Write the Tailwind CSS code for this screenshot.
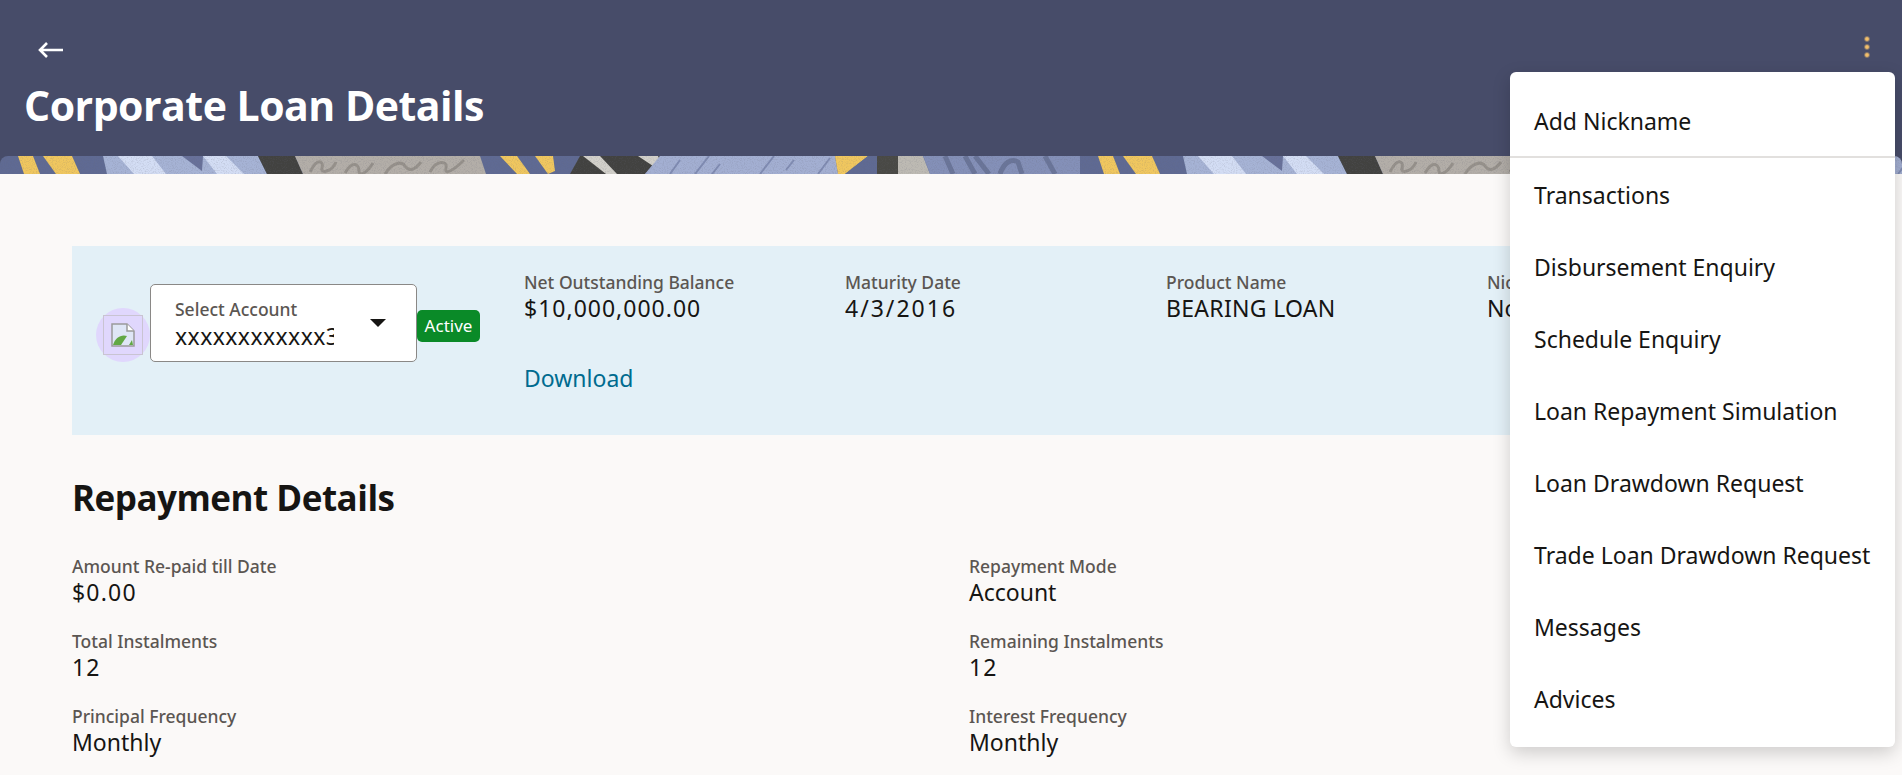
<!DOCTYPE html>
<html lang="en">
<head>
  <meta charset="UTF-8" />
  <meta name="viewport" content="width=device-width, initial-scale=1" />
  <title>Corporate Loan Details</title>
  <script src="https://cdn.jsdelivr.net/npm/@tailwindcss/browser@4"></script>
</head>
<body class="relative h-[775px] overflow-hidden bg-[#fbf9f8] font-['Noto_Sans',sans-serif] text-[#161513]">
  <header class="h-[156px] bg-[#474c69] text-white pl-[24px] pt-[38px]">
    <button class="block ml-[14px] h-6">
      <svg width="25" height="24" viewBox="0 0 25 24" fill="none" stroke="white" stroke-width="2.6"><path d="M25 12H2M9 5l-7 7 7 7" /></svg>
    </button>
    <h1 class="mt-[16px] text-[41px] leading-[54px] font-bold tracking-[-0.5px] font-['Open_Sans',sans-serif]">Corporate Loan Details</h1>
  </header>

  <!-- decorative strip, tile repeats every 1080px -->
  <div class="bg-[#474c69]">
    <svg class="block rounded-t-[8px]" width="1902" height="18">
      <defs>
        <filter id="soft"><feGaussianBlur stdDeviation="0.5" /></filter>
        <filter id="grain">
          <feTurbulence type="fractalNoise" baseFrequency="0.9" numOctaves="2" />
          <feColorMatrix values="0 0 0 0 0.15  0 0 0 0 0.15  0 0 0 0 0.2  0 0 0 1.6 -0.75" />
        </filter>
        <pattern id="strip" width="1080" height="18" patternUnits="userSpaceOnUse">
          <rect width="1080" height="18" fill="#5f6b93" />
          <polygon points="18,0 33,0 40,18 24,18" fill="#f0c75e" />
          <polygon points="43,0 72,0 80,18 56,18" fill="#f0c75e" />
          <polygon points="103,0 258,0 267,18 107,18" fill="#a6b3d5" />
          <polygon points="118,0 152,0 166,18 134,18" fill="#d3ddf4" />
          <polygon points="182,0 203,0 202,15" fill="#67719a" />
          <polygon points="203,0 226,0 244,18 217,18" fill="#d3ddf4" />
          <polygon points="258,0 295,0 303,18 267,18" fill="#42423f" />
          <polygon points="295,0 480,0 486,18 303,18" fill="#b3aea8" />
          <path d="M310 16c8-16 14-10 12-4s10 4 14-6M345 17c8-14 14-8 14-2s8 2 14-8M385 18c6-10 16-14 20-8s10 4 16-4M430 16c6-12 18-12 16-4s8 2 18-8" fill="none" stroke="#96918b" stroke-width="3" />
          <polygon points="500,0 517,0 530,18 517,18" fill="#f0c75e" />
          <polygon points="535,0 553,0 555,15 548,18" fill="#f0c75e" />
          <polygon points="580,0 660,0 645,18 570,18" fill="#42423f" />
          <polygon points="583,0 600,0 617,18 606,18" fill="#d2d0ca" />
          <polygon points="638,0 658,0 660,5 653,10" fill="#d2d0ca" />
          <polygon points="660,0 835,0 838,18 645,18" fill="#a3afd2" />
          <path d="M670 18l10-14M695 18l14-18M712 18l8-10M760 18l14-18M786 14l8-10M818 18l12-16" stroke="#7f8bb2" stroke-width="2" fill="none" />
          <polygon points="835,0 868,0 845,18 838,18" fill="#f0c75e" />
          <polygon points="868,0 877,0 877,18 845,18" fill="#5f6b93" />
          <rect x="877" width="21" height="18" fill="#4a4a45" />
          <polygon points="898,0 923,0 930,18 898,18" fill="#bdbab3" />
          <polygon points="923,0 1080,0 1080,18 930,18" fill="#8490b8" />
          <path d="M945 0l8 18M965 0l10 18M975 0l14 18M1000 18c4-12 12-16 18-12l4 12M1045 0l10 18" stroke="#6a7599" stroke-width="5" fill="none" />
        </pattern>
      </defs>
      <rect width="1902" height="18" fill="url(#strip)" filter="url(#soft)" />
      <rect width="1902" height="18" filter="url(#grain)" opacity="0.35" />
    </svg>
  </div>

  <main class="px-[72px] pt-[72px]">
    <section class="flex h-[189px] bg-[#e3f0f7]">
      <div class="flex w-[452px] shrink-0 items-start pl-[24px]">
        <div class="relative mt-[62px] size-[54px] rounded-full bg-[#e0d7fd]">
          <div class="absolute left-[7px] top-[7px] flex size-10 items-center justify-center border border-[#c9c4d2]">
            <svg width="24" height="24" viewBox="0 0 24 24">
              <path d="M1 1h15l7 7v15H1z" fill="#dfe6f6" stroke="#9b9b9b" stroke-width="1.5" />
              <path d="M16 1v7h7" fill="#fff" stroke="#9b9b9b" stroke-width="1.5" />
              <path d="M2 22c2-7 8-11 14-9l-6 9z" fill="#62a845" />
              <path d="M18 22l3-5 1 5z" fill="#62a845" />
            </svg>
          </div>
        </div>
        <div class="relative mt-[38px] h-[78px] w-[267px] shrink-0 rounded-[5px] border border-[#8a8886] bg-white pl-[24px] pt-[11px]">
          <div class="text-[17.5px] leading-[26px] font-medium text-[#5b5652]">Select Account</div>
          <div class="mt-px w-[159px] overflow-hidden text-[23px] leading-[26px] tracking-[0.4px] whitespace-nowrap">xxxxxxxxxxxx3456</div>
          <svg class="absolute left-[219px] top-[34px]" width="16" height="8" viewBox="0 0 16 8"><path d="M0 0h16l-8 8z" fill="#161513" /></svg>
        </div>
        <span class="mt-[64px] flex h-8 w-[63px] shrink-0 items-center justify-center rounded-[5px] bg-[#0a8a28] text-[17px] text-white">Active</span>
      </div>

      <div class="grid grid-cols-[repeat(4,321px)] pt-[23px]">
        <div>
          <div class="text-[17.5px] leading-[26px] font-medium text-[#5b5652]">Net Outstanding Balance</div>
          <div class="text-[23px] leading-[26px] tracking-[1px]">$10,000,000.00</div>
          <a class="mt-[42px] block text-[23px] leading-[30px] text-[#006b8f]">Download</a>
        </div>
        <div>
          <div class="text-[17.5px] leading-[26px] font-medium text-[#5b5652]">Maturity Date</div>
          <div class="text-[23px] leading-[26px] tracking-[2px]">4/3/2016</div>
        </div>
        <div>
          <div class="text-[17.5px] leading-[26px] font-medium text-[#5b5652]">Product Name</div>
          <div class="text-[23px] leading-[26px] tracking-[0.3px]">BEARING LOAN</div>
        </div>
        <div>
          <div class="text-[17.5px] leading-[26px] font-medium text-[#5b5652]">Nickname</div>
          <div class="text-[23px] leading-[26px]">Not Available</div>
        </div>
      </div>
    </section>

    <h2 class="mt-[40px] text-[35px] leading-[46px] font-bold tracking-[-0.5px] font-['Open_Sans',sans-serif]">Repayment Details</h2>

    <dl class="mt-[32px] grid grid-cols-[897px_1fr] gap-y-[23px]">
      <div>
        <dt class="text-[17.5px] leading-[26px] font-medium text-[#5b5652]">Amount Re-paid till Date</dt>
        <dd class="text-[23px] leading-[26px] tracking-[1.2px]">$0.00</dd>
      </div>
      <div>
        <dt class="text-[17.5px] leading-[26px] font-medium text-[#5b5652]">Repayment Mode</dt>
        <dd class="text-[23px] leading-[26px]">Account</dd>
      </div>
      <div>
        <dt class="text-[17.5px] leading-[26px] font-medium text-[#5b5652]">Total Instalments</dt>
        <dd class="text-[23px] leading-[26px] tracking-[1px]">12</dd>
      </div>
      <div>
        <dt class="text-[17.5px] leading-[26px] font-medium text-[#5b5652]">Remaining Instalments</dt>
        <dd class="text-[23px] leading-[26px] tracking-[1px]">12</dd>
      </div>
      <div>
        <dt class="text-[17.5px] leading-[26px] font-medium text-[#5b5652]">Principal Frequency</dt>
        <dd class="text-[23px] leading-[26px]">Monthly</dd>
      </div>
      <div>
        <dt class="text-[17.5px] leading-[26px] font-medium text-[#5b5652]">Interest Frequency</dt>
        <dd class="text-[23px] leading-[26px]">Monthly</dd>
      </div>
    </dl>
  </main>

  <!-- kebab + open menu -->
  <button class="absolute left-[1865px] top-[37px] flex flex-col gap-1">
    <span class="size-1 rounded-full bg-[#f2bf6a] outline outline-[#f2bf6a]/40"></span>
    <span class="size-1 rounded-full bg-[#f2bf6a] outline outline-[#f2bf6a]/40"></span>
    <span class="size-1 rounded-full bg-[#f2bf6a] outline outline-[#f2bf6a]/40"></span>
  </button>
  <ul class="absolute left-[1510px] top-[72px] w-[385px] h-[675px] rounded-[6px] bg-white text-[23px] shadow-[0_6px_18px_rgba(0,0,0,0.18)]">
    <li class="flex h-[86px] items-center border-b-2 border-[#e2e0de] pl-[24px] pt-[14px]">Add Nickname</li>
    <li class="flex h-[72px] items-center pl-[24px] pt-[2px]">Transactions</li>
    <li class="flex h-[72px] items-center pl-[24px] pt-[2px]">Disbursement Enquiry</li>
    <li class="flex h-[72px] items-center pl-[24px] pt-[2px]">Schedule Enquiry</li>
    <li class="flex h-[72px] items-center pl-[24px] pt-[2px]">Loan Repayment Simulation</li>
    <li class="flex h-[72px] items-center pl-[24px] pt-[2px]">Loan Drawdown Request</li>
    <li class="flex h-[72px] items-center pl-[24px] pt-[2px]">Trade Loan Drawdown Request</li>
    <li class="flex h-[72px] items-center pl-[24px] pt-[2px]">Messages</li>
    <li class="flex h-[72px] items-center pl-[24px] pt-[2px]">Advices</li>
  </ul>
</body>
</html>
